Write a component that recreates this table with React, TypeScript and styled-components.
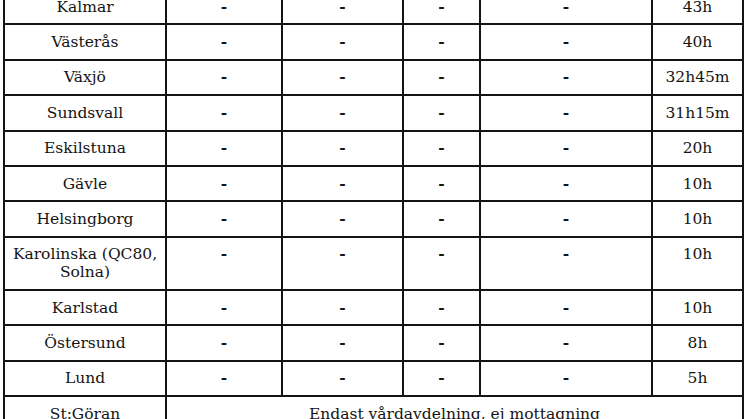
import React from "react";
import styled, { createGlobalStyle } from "styled-components";

const Global = createGlobalStyle`
  html, body { margin: 0; padding: 0; background: #ffffff; overflow: hidden; }
  #root { width: 746px; height: 419px; overflow: hidden; }
`;

const Table = styled.table`
  border-collapse: collapse;
  table-layout: fixed;
  width: 739px;
  margin: -12px 0 0 3px;
  font-family: "DejaVu Serif", "Liberation Serif", serif;
  font-size: 15.5px;
  line-height: 18px;
  color: #141414;
`;

const Cell = styled.td`
  border: 2px solid #141414;
  padding: 7.7px 3px 7.7px;
  text-align: center;
  vertical-align: top;
`;

const Dash = styled.span`
  font-weight: bold;
`;

type Row = { name: React.ReactNode; time: string };

const rows: Row[] = [
  { name: "Kalmar", time: "43h" },
  { name: "Västerås", time: "40h" },
  { name: "Växjö", time: "32h45m" },
  { name: "Sundsvall", time: "31h15m" },
  { name: "Eskilstuna", time: "20h" },
  { name: "Gävle", time: "10h" },
  { name: "Helsingborg", time: "10h" },
  {
    name: (
      <>
        Karolinska (QC80,
        <br />
        Solna)
      </>
    ),
    time: "10h",
  },
  { name: "Karlstad", time: "10h" },
  { name: "Östersund", time: "8h" },
  { name: "Lund", time: "5h" },
];

const widths = [162, 116, 121, 77, 172, 91];

export default function App() {
  return (
    <>
      <Global />
      <Table>
        <colgroup>
          {widths.map((w, i) => (
            <col key={i} style={{ width: w }} />
          ))}
        </colgroup>
        <tbody>
          {rows.map((r, i) => (
            <tr key={i}>
              <Cell>{r.name}</Cell>
              <Cell><Dash>-</Dash></Cell>
              <Cell><Dash>-</Dash></Cell>
              <Cell><Dash>-</Dash></Cell>
              <Cell><Dash>-</Dash></Cell>
              <Cell>{r.time}</Cell>
            </tr>
          ))}
          <tr>
            <Cell>St:Göran</Cell>
            <Cell colSpan={5}>Endast vårdavdelning, ej mottagning</Cell>
          </tr>
        </tbody>
      </Table>
    </>
  );
}
